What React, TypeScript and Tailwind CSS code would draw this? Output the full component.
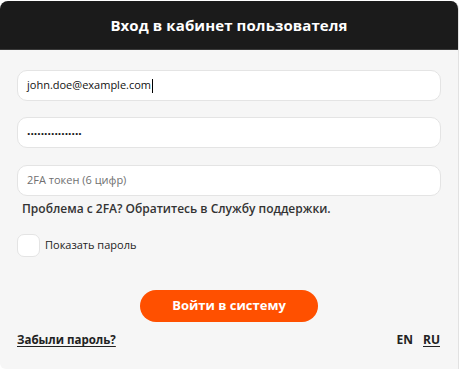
import React from "react";

export default function App() {
  const font = { fontFamily: '"Open Sans", "Noto Sans", sans-serif' };
  return (
    <div className="w-[460px] h-[370px] bg-white" style={font}>
      <div className="w-[459px] h-[369px] pt-px">
        <div className="h-[368px] rounded-t-[8px] rounded-bl-[6px] border-r border-[#e2e2e2] bg-[#f6f6f6] overflow-hidden flex flex-col">
          <div className="h-[49px] bg-[#1b1b1b] border-b border-[#3a3a3a] flex items-center justify-center">
            <span className="text-white text-[15px] font-bold tracking-[0.1px]">Вход в кабинет пользователя</span>
          </div>
          <div className="flex flex-col px-[17px] pt-[20px]">
            <div className="h-[31px] rounded-[10px] border border-[#e4e4e4] bg-white flex items-center pl-[9px] text-[11px] text-[#111]">
              <span className="font-medium">john.doe@example.com</span>
              <span className="w-px h-[14px] bg-black ml-px" />
            </div>
            <div className="mt-[16px] h-[31px] rounded-[10px] border border-[#e4e4e4] bg-white flex items-center pl-[9px] text-[12px] text-[#111]">
              <span className="font-bold tracking-[0px] -mt-[4px]">................</span>
            </div>
            <div className="mt-[17px] h-[31px] rounded-[10px] border border-[#e4e4e4] bg-white flex items-center pl-[9px] text-[11px] text-[#707070] font-medium">
              2FA токен (6 цифр)
            </div>
            <div className="mt-[4px] pl-[5px] text-[12px] font-semibold text-[#333]">
              Проблема с 2FA? Обратитесь в Службу поддержки.
            </div>
            <div className="mt-[16px] flex items-center">
              <div className="w-[23px] h-[23px] rounded-[7px] border border-[#e4e4e4] bg-white" />
              <span className="ml-[5px] text-[11px] font-medium text-[#222]">Показать пароль</span>
            </div>
            <div className="mt-[33px] flex justify-center">
              <button className="w-[178px] h-[32px] rounded-full bg-[#ff5000] text-white text-[13px] font-bold">
                Войти в систему
              </button>
            </div>
            <div className="mt-[9px] flex items-center justify-between text-[12px] font-bold text-[#222]">
              <span className="underline underline-offset-2 text-[11.5px]">Забыли пароль?</span>
              <div className="flex gap-[10px] pr-[1px]">
                <span>EN</span>
                <span className="underline underline-offset-2">RU</span>
              </div>
            </div>
          </div>
        </div>
      </div>
    </div>
  );
}
